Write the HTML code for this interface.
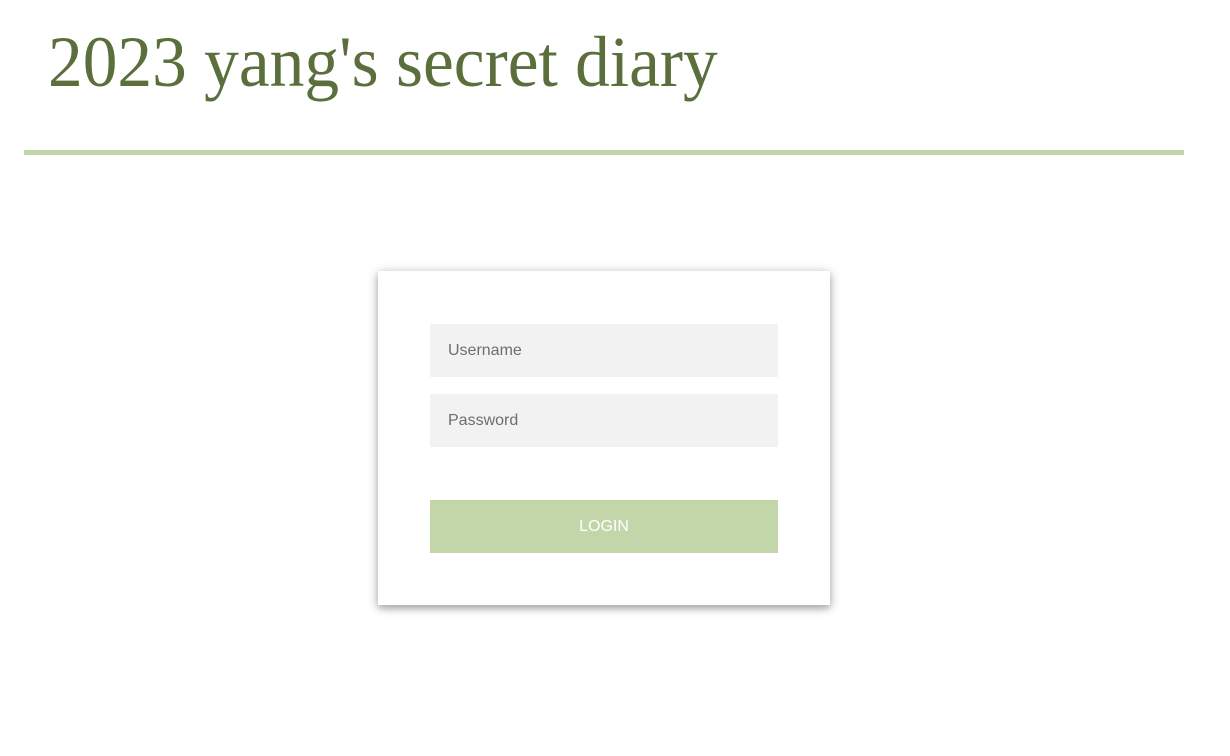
<!DOCTYPE html>
<html><head><style>
body{margin:0;background:#fff;width:1230px;height:756px;position:relative;overflow:hidden;font-family:"Liberation Sans",sans-serif}
h1{position:absolute;left:48px;top:0;margin:0;font-family:"Liberation Serif",serif;font-weight:normal;font-size:72px;line-height:72px;padding-top:26px;color:#5a6f3c;white-space:nowrap;transform:scaleX(0.964);transform-origin:0 0}
.line{position:absolute;left:24px;top:150px;width:1160px;height:5px;background:#c2d6a9}
.card{position:absolute;left:378px;top:271px;width:452px;height:334px;background:#fff;box-shadow:0 2px 10px rgba(0,0,0,.3),0 4px 6px rgba(0,0,0,.15)}
.in{position:absolute;left:52px;width:348px;height:53px;background:#f2f2f2;color:#6e6e6e;font-size:16px;line-height:54px;text-indent:18px}
.btn{position:absolute;left:52px;top:229px;width:348px;height:53px;background:#c2d6a9;color:#fff;font-size:16px;line-height:53px;text-align:center}
</style></head><body>
<h1>2023 yang's secret diary</h1>
<div class="line"></div>
<div class="card">
<div class="in" style="top:53px">Username</div>
<div class="in" style="top:123px">Password</div>
<div class="btn">LOGIN</div>
</div>
</body></html>
